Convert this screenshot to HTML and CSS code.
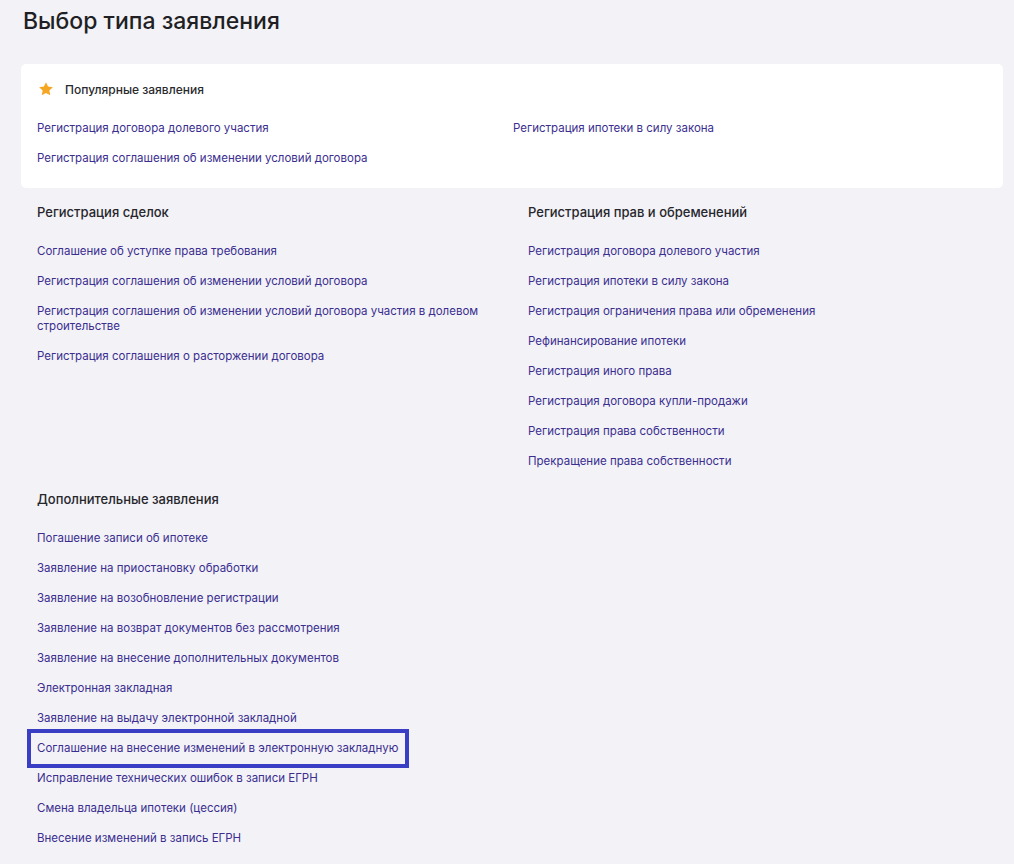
FILE: index.html
```html
<!DOCTYPE html>
<html lang="ru">
<head>
  <meta charset="utf-8">
  <title>Выбор типа заявления</title>
  <link rel="stylesheet" href="styles.css">
</head>
<body>
  <h1 class="page-title">Выбор типа заявления</h1>

  <!-- Popular -->
  <div class="popular-card">
    <div class="popular-head">
      <svg class="star" width="16" height="16" viewBox="0 0 24 24">
        <path d="M12 1.8l3.1 6.6 7.2.9-5.3 5 1.4 7.1L12 17.9l-6.4 3.5 1.4-7.1-5.3-5 7.2-.9z" fill="#f5a623"/>
      </svg>
      <span>Популярные заявления</span>
    </div>
    <div class="popular-list">
      <a class="doc-link" href="#">Регистрация договора долевого участия</a>
      <a class="doc-link" href="#">Регистрация ипотеки в силу закона</a>
      <a class="doc-link" href="#">Регистрация соглашения об изменении условий договора</a>
    </div>
  </div>

  <!-- Sections -->
  <div class="sections">
    <div class="section">
      <h3>Регистрация сделок</h3>
      <div class="link-list">
        <a class="doc-link" href="#">Соглашение об уступке права требования</a>
        <a class="doc-link" href="#">Регистрация соглашения об изменении условий договора</a>
        <a class="doc-link" href="#">Регистрация соглашения об изменении условий договора участия в долевом строительстве</a>
        <a class="doc-link" href="#">Регистрация соглашения о расторжении договора</a>
      </div>
    </div>

    <div class="section">
      <h3>Регистрация прав и обременений</h3>
      <div class="link-list">
        <a class="doc-link" href="#">Регистрация договора долевого участия</a>
        <a class="doc-link" href="#">Регистрация ипотеки в силу закона</a>
        <a class="doc-link" href="#">Регистрация ограничения права или обременения</a>
        <a class="doc-link" href="#">Рефинансирование ипотеки</a>
        <a class="doc-link" href="#">Регистрация иного права</a>
        <a class="doc-link" href="#">Регистрация договора купли-продажи</a>
        <a class="doc-link" href="#">Регистрация права собственности</a>
        <a class="doc-link" href="#">Прекращение права собственности</a>
      </div>
    </div>

    <div class="section">
      <h3>Дополнительные заявления</h3>
      <div class="link-list">
        <a class="doc-link" href="#">Погашение записи об ипотеке</a>
        <a class="doc-link" href="#">Заявление на приостановку обработки</a>
        <a class="doc-link" href="#">Заявление на возобновление регистрации</a>
        <a class="doc-link" href="#">Заявление на возврат документов без рассмотрения</a>
        <a class="doc-link" href="#">Заявление на внесение дополнительных документов</a>
        <a class="doc-link" href="#">Электронная закладная</a>
        <a class="doc-link" href="#">Заявление на выдачу электронной закладной</a>
        <a class="doc-link selected" href="#">Соглашение на внесение изменений в электронную закладную</a>
        <a class="doc-link" href="#">Исправление технических ошибок в записи ЕГРН</a>
        <a class="doc-link" href="#">Смена владельца ипотеки (цессия)</a>
        <a class="doc-link" href="#">Внесение изменений в запись ЕГРН</a>
      </div>
    </div>
  </div>
</body>
</html>
```

FILE: styles.css
```css
/* Page */
body {
  margin: 0;
  padding: 0 11px 0 21px;
  background-color: #f2f2f7;
  font-family: Inter, "Noto Sans", sans-serif;
  color: #26262b;
}

.page-title {
  margin: 0;
  padding: 7px 0 0 2px;
  height: 57px;
  font-size: 23px;
  font-weight: 500;
  color: #1f1f24;
}

/* Popular card */
.popular-card {
  background-color: #ffffff;
  border-radius: 5px;
  padding: 16px 16px 22px 16px;
}
.popular-head {
  display: flex;
  align-items: center;
  gap: 11px;
  height: 18px;
  font-size: 12px;
  font-weight: 500;
  color: #2a2a2e;
}
.popular-head .star {
  margin-left: 1px;
}
.popular-list {
  display: grid;
  grid-template-columns: 476px 1fr;
  row-gap: 15px;
  margin-top: 23px;
}

/* Links */
.doc-link {
  display: block;
  font-size: 11.5px;
  line-height: 15px;
  color: #3b2e8f;
  text-decoration: none;
}
.doc-link:hover {
  text-decoration: underline;
}

/* Sections */
.sections {
  display: grid;
  grid-template-columns: 491px 1fr;
  row-gap: 21px;
  padding: 15px 16px 20px 16px;
}
.section h3 {
  margin: 0 0 23px 0;
  font-size: 13px;
  line-height: 18px;
  font-weight: 500;
  color: #26262b;
}
.link-list {
  display: flex;
  flex-direction: column;
  gap: 15px;
  padding-right: 20px;
}

/* Highlighted item */
.doc-link.selected {
  margin: -12px 0 -12px -10px;
  padding: 8px 7px 8px 6px;
  border: 4px solid #3a3ec4;
  align-self: flex-start;
}
```
